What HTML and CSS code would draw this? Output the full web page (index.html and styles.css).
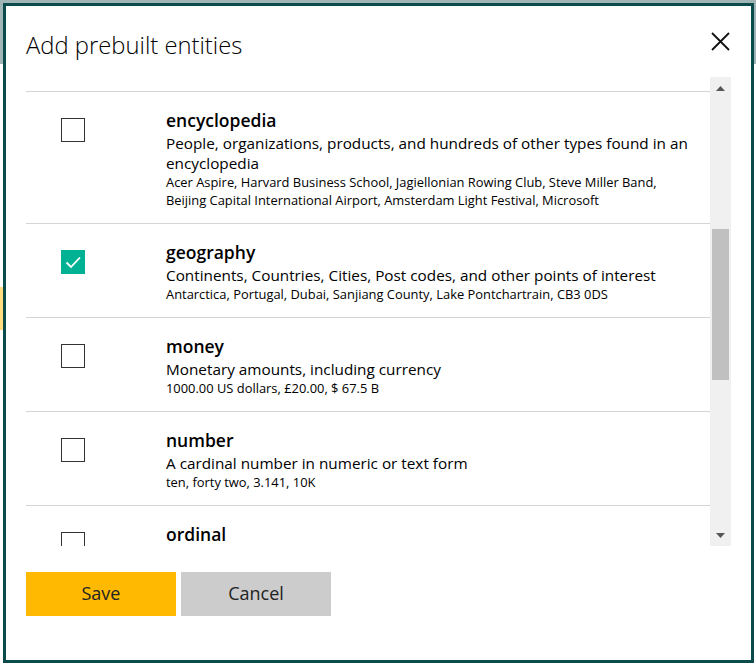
FILE: index.html
```html
<!DOCTYPE html>
<html>
<head>
<meta charset="utf-8">
<link rel="stylesheet" href="styles.css">
</head>
<body>
<div class="page">
  <div class="bg-band"></div>
  <div class="bg-button"></div>
</div>
<div class="modal">
  <div class="modal-header">
    <h1 class="modal-title">Add prebuilt entities</h1>
    <svg class="close" width="19" height="19" viewBox="0 0 19 19"><path d="M1 1 L18 18 M18 1 L1 18" stroke="#111" stroke-width="1.8" fill="none"/></svg>
  </div>
  <div class="modal-body">
    <div class="list-viewport">
      <div class="list-spacer"></div>
      <div class="item">
        <div class="check"></div>
        <div class="text">
          <div class="name">encyclopedia</div>
          <div class="desc">People, organizations, products, and hundreds of other types found in an encyclopedia</div>
          <div class="examples">Acer Aspire, Harvard Business School, Jagiellonian Rowing Club, Steve Miller Band, Beijing Capital International Airport, Amsterdam Light Festival, Microsoft</div>
        </div>
      </div>
      <div class="item">
        <div class="check checked"><svg width="24" height="24" viewBox="0 0 24 24"><path d="M5.5 12.5 L10 17 L19 7.5" stroke="#fff" stroke-width="1.8" fill="none"/></svg></div>
        <div class="text">
          <div class="name">geography</div>
          <div class="desc">Continents, Countries, Cities, Post codes, and other points of interest</div>
          <div class="examples">Antarctica, Portugal, Dubai, Sanjiang County, Lake Pontchartrain, CB3 0DS</div>
        </div>
      </div>
      <div class="item">
        <div class="check"></div>
        <div class="text">
          <div class="name">money</div>
          <div class="desc">Monetary amounts, including currency</div>
          <div class="examples">1000.00 US dollars, £20.00, $ 67.5 B</div>
        </div>
      </div>
      <div class="item">
        <div class="check"></div>
        <div class="text">
          <div class="name">number</div>
          <div class="desc">A cardinal number in numeric or text form</div>
          <div class="examples">ten, forty two, 3.141, 10K</div>
        </div>
      </div>
      <div class="item">
        <div class="check"></div>
        <div class="text">
          <div class="name">ordinal</div>
        </div>
      </div>
    </div>
    <div class="scrollbar">
      <div class="sb-btn"><svg width="9" height="5" viewBox="0 0 9 5"><polygon points="4.5,0 9,5 0,5" fill="#555"/></svg></div>
      <div class="sb-track"><div class="sb-thumb"></div></div>
      <div class="sb-btn"><svg width="9" height="5" viewBox="0 0 9 5"><polygon points="0,0 9,0 4.5,5" fill="#555"/></svg></div>
    </div>
  </div>
  <div class="modal-footer">
    <button class="btn btn-save">Save</button>
    <button class="btn btn-cancel">Cancel</button>
  </div>
</div>
</body>
</html>
```
FILE: styles.css
```css
html, body {
  margin: 0;
  padding: 0;
  background: #fff;
  font-family: "Open Sans", "Noto Sans", sans-serif;
  color: #000;
}
.page {
  height: 665px;
  overflow: hidden;
}
.bg-band {
  height: 64px;
  background: #a0b5b5;
}
.bg-button {
  margin-top: 223px;
  width: 120px;
  height: 43px;
  background: #fedc7f;
}
.modal {
  position: fixed;
  left: 3px;
  top: 3px;
  width: 705px;
  height: 654px;
  border: 3px solid #0c4b4b;
  background: #fff;
  display: flex;
  flex-direction: column;
  padding: 0 20px 0 20px;
  box-sizing: content-box;
}
.modal-header {
  height: 71px;
  display: flex;
  justify-content: space-between;
  align-items: flex-start;
  padding-top: 23px;
  box-sizing: border-box;
}
.modal-title {
  margin: 0;
  font-size: 23.8px;
  font-weight: 300;
  line-height: 32px;
  color: #000;
}
.close {
  margin-top: 3px;
  margin-right: 1px;
}
.modal-body {
  height: 469px;
  display: flex;
}
.list-viewport {
  flex: 1;
  overflow: hidden;
}
.list-spacer {
  height: 14px;
}
.item {
  border-top: 1px solid #d4d4d4;
  display: grid;
  grid-template-columns: 140px 1fr;
  padding: 17px 10px 14px 0;
}
.check {
  width: 24px;
  height: 24px;
  box-sizing: border-box;
  border: 1px solid #333;
  margin-left: 35px;
  margin-top: 9px;
}
.check.checked {
  border: none;
  background: #00b294;
}
.check svg {
  display: block;
}
.name {
  font-size: 17.5px;
  font-weight: 600;
  line-height: 24px;
  margin-top: -1px;
  margin-bottom: 1px;
}
.desc {
  font-size: 15.3px;
  line-height: 20px;
}
.examples {
  font-size: 12.9px;
  line-height: 18px;
}
.scrollbar {
  width: 21px;
  background: #f0f0f0;
  display: flex;
  flex-direction: column;
}
.sb-btn {
  height: 22px;
  display: flex;
  align-items: center;
  justify-content: center;
}
.sb-btn svg {
  display: block;
}
.sb-track {
  flex: 1;
  padding: 0 2px;
}
.sb-thumb {
  margin-top: 130px;
  height: 151px;
  background: #c0c0c0;
}
.modal-footer {
  display: flex;
  gap: 5px;
  margin-top: 26px;
}
.btn {
  width: 150px;
  height: 44px;
  border: none;
  font-family: inherit;
  font-size: 18px;
  color: #222;
  padding: 0 0 2px 0;
}
.btn-save {
  background: #ffb900;
}
.btn-cancel {
  background: #cccccc;
}
```
